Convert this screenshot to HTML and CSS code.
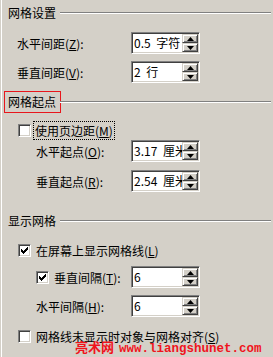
FILE: index.html
```html
<!DOCTYPE html>
<html lang="zh-CN">
<head>
<meta charset="utf-8">
<title>网格</title>
<link rel="stylesheet" href="styles.css">
</head>
<body>
<div class="dlg">
  <div class="head h1"><span class="ht">网格设置</span><i class="rule"></i></div>

  <div class="row r1">
    <span class="lbl in1">水平间距(<u>Z</u>):</span>
    <div class="spin"><span class="val">0.5 字符</span><span class="btns"><span class="btn"><svg width="7" height="4" viewBox="0 0 7 4"><polygon points="3.5,0 7,4 0,4"/></svg></span><span class="btn"><svg width="7" height="4" viewBox="0 0 7 4"><polygon points="0,0 7,0 3.5,4"/></svg></span></span></div>
  </div>
  <div class="row r2">
    <span class="lbl in1">垂直间距(<u>V</u>):</span>
    <div class="spin"><span class="val">2 行</span><span class="btns"><span class="btn"><svg width="7" height="4" viewBox="0 0 7 4"><polygon points="3.5,0 7,4 0,4"/></svg></span><span class="btn"><svg width="7" height="4" viewBox="0 0 7 4"><polygon points="0,0 7,0 3.5,4"/></svg></span></span></div>
  </div>

  <div class="head h2"><span class="ht marked">网格起点</span><i class="rule"></i></div>

  <div class="crow c1">
    <span class="cb"></span><span class="ctext focus">使用页边距(<u>M</u>)</span>
  </div>
  <div class="row r3">
    <span class="lbl in2">水平起点(<u>O</u>):</span>
    <div class="spin"><span class="val">3.17 厘米</span><span class="btns"><span class="btn"><svg width="7" height="4" viewBox="0 0 7 4"><polygon points="3.5,0 7,4 0,4"/></svg></span><span class="btn"><svg width="7" height="4" viewBox="0 0 7 4"><polygon points="0,0 7,0 3.5,4"/></svg></span></span></div>
  </div>
  <div class="row r4">
    <span class="lbl in2">垂直起点(<u>R</u>):</span>
    <div class="spin"><span class="val">2.54 厘米</span><span class="btns"><span class="btn"><svg width="7" height="4" viewBox="0 0 7 4"><polygon points="3.5,0 7,4 0,4"/></svg></span><span class="btn"><svg width="7" height="4" viewBox="0 0 7 4"><polygon points="0,0 7,0 3.5,4"/></svg></span></span></div>
  </div>

  <div class="head h3"><span class="ht">显示网格</span><i class="rule"></i></div>

  <div class="crow c2">
    <span class="cb checked"><svg width="7" height="7" viewBox="0 0 7 7"><path d="M0 2h1v1h1v1h1V3h1V2h1V1h1V0h1v3H6v1H5v1H4v1H3v1H2V6H1V5H0z"/></svg></span><span class="ctext">在屏幕上显示网格线(<u>L</u>)</span>
  </div>
  <div class="row r5">
    <span class="lbl in2 withcb"><span class="cb checked"><svg width="7" height="7" viewBox="0 0 7 7"><path d="M0 2h1v1h1v1h1V3h1V2h1V1h1V0h1v3H6v1H5v1H4v1H3v1H2V6H1V5H0z"/></svg></span><span class="ctext">垂直间隔(<u>T</u>):</span></span>
    <div class="spin"><span class="val">6</span><span class="btns"><span class="btn"><svg width="7" height="4" viewBox="0 0 7 4"><polygon points="3.5,0 7,4 0,4"/></svg></span><span class="btn"><svg width="7" height="4" viewBox="0 0 7 4"><polygon points="0,0 7,0 3.5,4"/></svg></span></span></div>
  </div>
  <div class="row r6">
    <span class="lbl in2">水平间隔(<u>H</u>):</span>
    <div class="spin"><span class="val">6</span><span class="btns"><span class="btn"><svg width="7" height="4" viewBox="0 0 7 4"><polygon points="3.5,0 7,4 0,4"/></svg></span><span class="btn"><svg width="7" height="4" viewBox="0 0 7 4"><polygon points="0,0 7,0 3.5,4"/></svg></span></span></div>
  </div>

  <div class="crow c3">
    <span class="cb"></span><span class="ctext">网格线未显示时对象与网格对齐(<u>S</u>)</span>
  </div>

  <div class="wm"><span class="wm-cn">亮术网</span><span class="wm-url">www.liangshunet.com</span></div>
</div>
</body>
</html>
```

FILE: styles.css
```css
html, body {
  margin: 0;
  padding: 0;
}
body {
  width: 273px;
  height: 357px;
  overflow: hidden;
  background: #d4d0c8;
  font-family: "Noto Sans CJK SC", "Noto Sans", sans-serif;
  font-size: 12px;
  color: #000;
}
.dlg {
  position: relative;
  box-sizing: border-box;
  height: 357px;
  padding-top: 5px;
  border-left: 1px solid #fff;
  margin-left: 1px;
}
u {
  text-decoration: underline;
  text-underline-offset: 1px;
}

/* group headers */
.head {
  display: flex;
  align-items: center;
  height: 16px;
  line-height: 16px;
  padding-left: 6px;
}
.ht {
  white-space: nowrap;
}
.rule {
  flex: 1;
  height: 0;
  border-top: 1px solid #808080;
  border-bottom: 1px solid #fff;
  margin-left: 4px;
  margin-right: 2px;
}
.marked {
  outline: 1px solid #e8161c;
  outline-offset: 0px;
  padding: 2px 4px 2px 3px;
  margin: 0 -4px 0 -3px;
}
.h1 { margin-bottom: 11px; }
.h2 { margin-top: 11px; margin-bottom: 11px; }
.h3 { margin-top: 21px; margin-bottom: 12px; }

/* rows with a spin box */
.row {
  display: grid;
  grid-template-columns: 129px 69px;
  align-items: center;
  height: 22px;
}
.r1 { margin-bottom: 7px; }
.r3 { margin-top: 1px; margin-bottom: 8px; }
.r5 { margin-top: 7px; margin-bottom: 7px; }
.lbl { white-space: nowrap; }
.in1 { padding-left: 15px; }
.in2 { padding-left: 34px; }
.withcb {
  display: flex;
  align-items: center;
  gap: 5px;
}

.spin {
  box-sizing: border-box;
  display: flex;
  height: 22px;
  background: #fff;
  border: 1px solid;
  border-color: #808080 #fff #fff #808080;
  box-shadow: inset 1px 1px 0 #404040, inset -1px -1px 0 #d4d0c8;
  padding: 1px;
}
.val {
  flex: 1;
  min-width: 0;
  overflow: hidden;
  white-space: nowrap;
  line-height: 18px;
  padding-left: 1px;
  word-spacing: 3px;
}
.btns {
  display: flex;
  flex-direction: column;
  width: 16px;
  flex: none;
}
.btn {
  flex: 1;
  box-sizing: border-box;
  display: flex;
  align-items: center;
  justify-content: center;
  background: #d4d0c8;
  border: 1px solid;
  border-color: #d4d0c8 #404040 #404040 #d4d0c8;
  box-shadow: inset 1px 1px 0 #fff, inset -1px -1px 0 #808080;
}
.btn svg { display: block; fill: #000; }

/* check rows */
.crow {
  display: flex;
  align-items: center;
  height: 18px;
  padding-left: 16px;
  gap: 5px;
}
.c3 { margin-top: 10px; }
.cb {
  box-sizing: border-box;
  flex: none;
  width: 13px;
  height: 13px;
  background: #fff;
  border: 1px solid;
  border-color: #808080 #fff #fff #808080;
  box-shadow: inset 1px 1px 0 #404040, inset -1px -1px 0 #d4d0c8;
  display: flex;
  align-items: center;
  justify-content: center;
}
.cb svg { display: block; fill: #000; }
.ctext { white-space: nowrap; }
.focus {
  outline: 1px dotted #000;
  outline-offset: 0;
  padding: 0 1px;
  margin-left: -2px;
}

/* watermark overlay */
.wm {
  position: absolute;
  left: 73px;
  top: 339px;
  display: flex;
  align-items: baseline;
  gap: 5px;
  color: #f0141c;
  line-height: 16px;
  white-space: nowrap;
}
.wm-cn {
  font-family: "Noto Sans CJK SC", serif;
  font-size: 13px;
  font-weight: bold;
}
.wm-url {
  font-family: "Liberation Mono", monospace;
  font-size: 12.5px;
  font-weight: bold;
}
```
